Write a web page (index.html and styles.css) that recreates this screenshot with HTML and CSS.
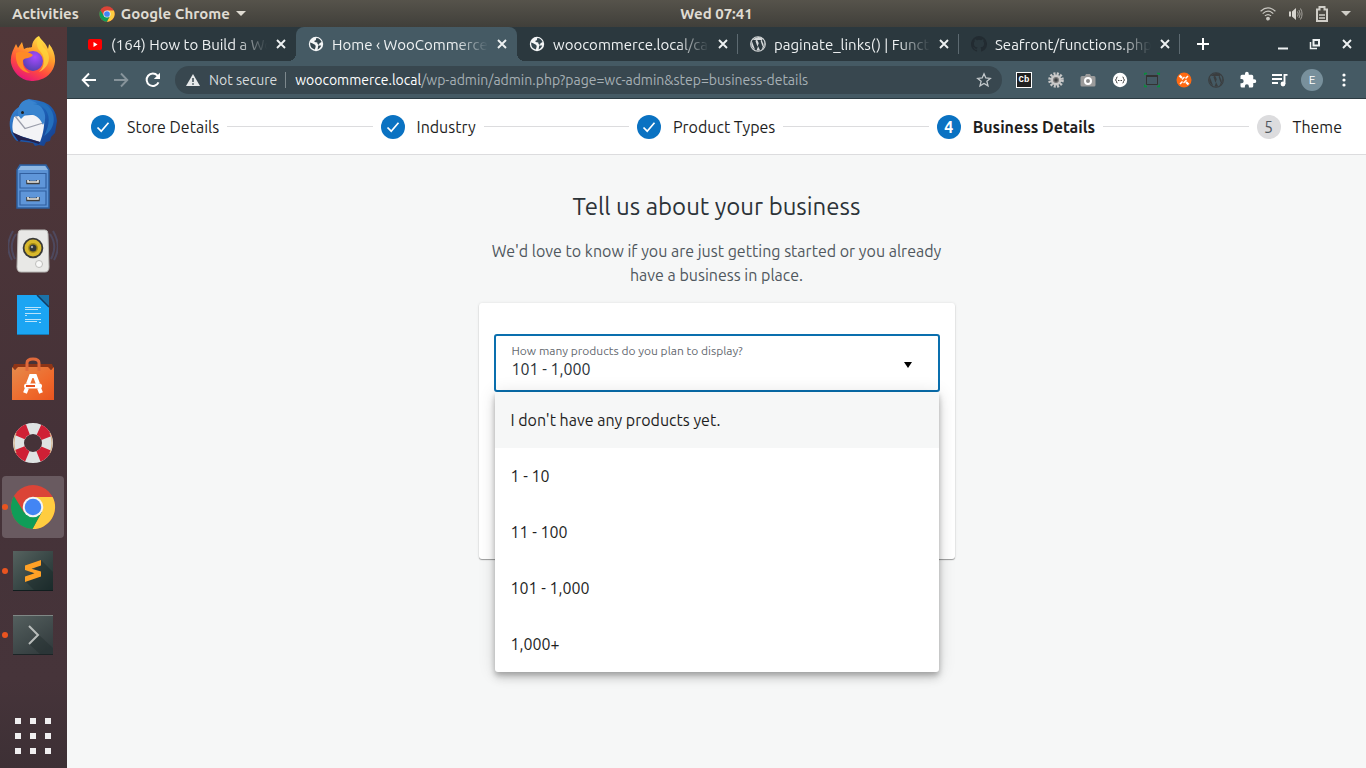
FILE: index.html
```
<!DOCTYPE html>
<html lang="en">
<head>
<meta charset="utf-8">
<title>Home ‹ WooCommerce</title>
<link rel="stylesheet" href="styles.css">
</head>
<body>
<svg class="defs" aria-hidden="true">
  <defs>
    <linearGradient id="fx-body" x1="0.8" y1="0" x2="0.3" y2="1"><stop offset="0" stop-color="#fff04f"/><stop offset="0.4" stop-color="#ff9a2b"/><stop offset="0.7" stop-color="#ff4a3f"/><stop offset="1" stop-color="#e3127f"/></linearGradient>
    <radialGradient id="fx-core" cx="0.6" cy="0.3" r="0.8"><stop offset="0" stop-color="#a84bff"/><stop offset="1" stop-color="#4a3fa8"/></radialGradient>
    <linearGradient id="tb" x1="0" y1="0" x2="1" y2="1"><stop offset="0" stop-color="#3f8fdb"/><stop offset="0.5" stop-color="#1d5fb5"/><stop offset="1" stop-color="#153a86"/></linearGradient>
    <linearGradient id="bag" x1="0" y1="0" x2="1" y2="1"><stop offset="0" stop-color="#e58a4c"/><stop offset="0.6" stop-color="#ef6a2c"/><stop offset="1" stop-color="#e9541f"/></linearGradient>
    <linearGradient id="slate" x1="0" y1="0" x2="1" y2="1"><stop offset="0" stop-color="#56625f"/><stop offset="1" stop-color="#1e2f2f"/></linearGradient>
    <linearGradient id="slate2" x1="0" y1="0" x2="0.6" y2="1"><stop offset="0" stop-color="#55605f"/><stop offset="1" stop-color="#343d3f"/></linearGradient>
    <symbol id="chrome" viewBox="0 0 48 48">
      <circle cx="24" cy="24" r="23" fill="#db4437"/>
      <path d="M4.1 12.5 14.5 29.5 24 34.5 24 47A23 23 0 0 1 4.1 12.5Z" fill="#0f9d58"/>
      <path d="M24 13.5H44.5A23 23 0 0 1 23.5 47L33.1 29.2Z" fill="#ffcd40"/>
      <path d="M23.5 47 33.2 29.3 24 24 14.8 29.3 24 34.5Z" fill="#0f9d58"/>
      <circle cx="24" cy="24" r="10.7" fill="#f5f5f5"/>
      <circle cx="24" cy="24" r="8.6" fill="#4285f4"/>
    </symbol>
    <symbol id="globe" viewBox="0 0 16 16">
      <circle cx="8" cy="8" r="7.2" fill="#f4f6f7"/>
      <path d="M2.2 6.6C3.6 7.3 4.8 7.6 6 8.2 7.6 9 7.9 9.8 7.6 10.9L6.8 13.4C3.7 13 1.8 10.4 2.2 6.6ZM8.3 2.1C11 2.2 12.8 3.8 13.6 6L11.5 7.2 11 8.8C9.7 8.6 9.2 7.6 9.3 6.6L6.7 6C6 4.8 6.6 4.5 7.8 4.3ZM10.2 9.6 13.2 9.6C12.6 11.6 11.6 12.5 9.6 13.5Z" fill="#34464e"/>
    </symbol>
    <symbol id="wp" viewBox="0 0 24 24">
      <path fill="currentColor" d="M12.2 15.5 9.8 21.7a10 10 0 0 0 5.3-.4zM20.600 7.100c.8 2.200.3 4.400-.6 7.100L17.200 20.600A10 10 0 0 0 20.600 7.100zM2.900 8A10 10 0 0 0 7.700 21zM4 6.100c2 .1 4.500-.1 5 0 .5.300.2.900-.9 1l3.100 9.200 1.900-5.500-1.600-3.800c-.8 0-.8-.9-.1-1 2 .2 3.800.1 5.300 0 .6.200.5.900-.8 1l3 9c1.200-3.400 1-4.500.2-6.300-1.200-2.200-1.700-4.500.3-5.100A10 10 0 0 0 4 6.100z"/>
      <circle cx="12" cy="12" r="11" fill="none" stroke="currentColor" stroke-width="1.600"/>
    </symbol>
    <symbol id="x" viewBox="0 0 12 12"><path d="M2 2 10 10M10 2 2 10" stroke="currentColor" stroke-width="1.900" fill="none"/></symbol>
    <symbol id="tick" viewBox="0 0 24 24"><path d="M6.500 12.500 10.200 16.200 17.500 7.800" stroke="#fff" stroke-width="1.700" fill="none"/></symbol>
  </defs>
</svg>

<header class="panel">
  <div class="panel-side">
    <button class="panel-btn">Activities</button>
    <button class="panel-btn panel-app"><svg width="16" height="16"><use href="#chrome"/></svg>Google Chrome<svg width="10" height="5" viewBox="0 0 10 5"><path d="M0 0H10L5 5Z" fill="currentColor"/></svg></button>
  </div>
  <time class="clock">Wed 07:41</time>
  <div class="panel-side panel-status">
    <svg width="16" height="14" viewBox="0 0 16 14" fill="none" stroke="#c9c7c1" stroke-width="1.200"><path d="M.6 4.200Q8-2.400 15.400 4.200M2.700 6.600Q8 1.800 13.300 6.600M4.900 8.900Q8 6.200 11.100 8.900"/><circle cx="8" cy="11.600" r="1.300" fill="#c9c7c1"/></svg>
    <svg width="14" height="14" viewBox="0 0 14 14" fill="none" stroke="#a5a39d"><path d="M0 4.500H2V9.500H0ZM3 4.500 7 1V13L3 9.500Z" fill="#d8d6d0" stroke="none"/><path d="M8.500 4.500Q10 7 8.500 9.500M10 3Q12.300 7 10 11M11.500 1.500Q14.600 7 11.500 12.500"/></svg>
    <svg width="12" height="16" viewBox="0 0 12 16" fill="none" stroke="#d0cec8" stroke-width="2"><path d="M1 3.500H3.500V1H8.500V3.500H11V15H1Z"/><path d="M3 9H9M3 12H9" stroke-width="1.500"/></svg>
    <svg width="10" height="5" viewBox="0 0 10 5"><path d="M0 0H10L5 5Z" fill="#d0cec8"/></svg>
  </div>
</header>

<div class="desktop">
<nav class="dock" aria-label="Dock">
  <button class="app" aria-label="Firefox"><svg width="48" height="48" viewBox="0 0 48 48">
    <path d="M30 1C32 5 37 8 39 14C40 10 40 9 40 9C46 16 48 26 44 34A22.500 22.500 0 0 1 2 28C1 21 4 15 7 9L9 13 13 7 15 14C18 12 21 13 23 12C23 7 26 3 30 1Z" fill="url(#fx-body)"/>
    <circle cx="24" cy="26" r="10" fill="url(#fx-core)"/>
    <path d="M7 18C13 15 20 17 24 20C21 24 17 22 14 25C13 31 16 35 21 38C10 37 6 27 7 18Z" fill="#ff8a26"/>
    <path d="M30 15C36 20 37 31 30 37C42 32 43 18 34 12L30 2C27 7 28 12 30 15Z" fill="#ffd83c" opacity=".75"/></svg></button>
  <button class="app" aria-label="Thunderbird"><svg width="48" height="48" viewBox="0 0 48 48">
    <path d="M20 0C25 2 42 0 47 16L48 22 47 28 46 34 42 38 41 42 37 43 35 47 30 46 26 47 24 44 8 42C-2 33-2 15 10 8C12 3 15 1 20 0Z" fill="url(#tb)"/>
    <path d="M10 17 34 15C37 22 34 36 31 43L5 35C2 29 4 22 5 18Z" fill="#f3f3f6"/><path d="M6 17 16 29.500 34 24" fill="none" stroke="#9b9eab" stroke-width="1.300"/>
    <path d="M20 1C30 3 41 14 34 26C31 19 26 14 16 16L12 20 9 16C8 7 13 1 20 1Z" fill="#3984cf"/><path d="M24 5C38 6 45 18 35 37C49 28 47 11 35 4Z" fill="#2470bd"/><path d="M3 33 14 38 31 43 30 45 20 42 12 41 10 43Z" fill="#24234f"/><circle cx="13.500" cy="13.500" r="1.500" fill="#222"/></svg></button>
  <button class="app" aria-label="Files"><svg width="36" height="48" viewBox="0 0 36 48">
    <path d="M5 2H31L34 7V45H2V7Z" fill="#5b92d4" stroke="#2c5f9f" stroke-width="1.500"/><path d="M6 3H30L33 7H3Z" fill="#8fb8e3"/>
    <path d="M5 10.500H31V25H5ZM5 28H31V42H5Z" fill="#5f96d9" stroke="#315f9f" stroke-width="1.200"/>
    <path d="M13 17V19.500H23V17M13 34V36.500H23V34" stroke="#3d3d3d" stroke-width="3.500" fill="none"/><path d="M13 17V19H23V17M13 34V36H23V34" stroke="#ecece8" stroke-width="1.600" fill="none"/></svg></button>
  <button class="app" aria-label="Rhythmbox"><svg width="50" height="46" viewBox="0 0 50 46">
    <path d="M8 6Q0 18 7 31M5 3Q-4 18 4 32M42 6Q50 18 43 31M45 3Q54 18 46 32" fill="none" stroke="#53628c" stroke-width="2" opacity=".45"/>
    <path d="M13 2H37Q40 2 40 6L41 39Q41 44 37 44H13Q9 44 9 39L10 6Q10 2 13 2Z" fill="#e8e8e6" stroke="#b9b9b6"/>
    <circle cx="25" cy="20" r="10.300" fill="#393a38"/><circle cx="25" cy="20" r="8.500" fill="#d8b82c"/><circle cx="25" cy="20" r="5" fill="#a88d16"/><circle cx="25" cy="20" r="3.500" fill="#303538"/><circle cx="24" cy="19" r="1.200" fill="#a6a6a6"/><circle cx="31" cy="36" r="3.500" fill="#f8f8f7" stroke="#bdbdbb"/></svg></button>
  <button class="app" aria-label="Writer"><svg width="32" height="40" viewBox="0 0 32 40"><path d="M0 0H20L32 12V40H0Z" fill="#1ba5f3"/><path d="M20 0H32V12Z" fill="#1b72a8"/><path d="M20 0 32 12" stroke="#123c63" stroke-width="1.500"/><path d="M0 39.500H32" stroke="#167bb5"/><path d="M8 12.500H24M8 14.500H21M8 18.500H24M8 20.500H10M8 24.500H24M8 26.500H20M22 27.500H24" stroke="#b9e3fb" stroke-width="1"/></svg></button>
  <button class="app" aria-label="Ubuntu Software"><svg width="42" height="44" viewBox="0 0 42 44"><path d="M2 7H40L42 12H0Z" fill="#8e3517"/><path d="M0 10 3 13 6 10H36L39 13 42 10V43H0Z" fill="url(#bag)"/><path d="M15 14V6Q15 2 21 2T27 6V14" fill="none" stroke="#e06a3c" stroke-width="3"/><path d="M16 27 19 19H23L26 27M15 31 13 36M27 31 29 36" stroke="#fff" stroke-width="4" fill="none"/><rect x="12" y="26.500" width="18" height="5" rx="2.500" fill="#fff"/><path d="M14 29H23" stroke="#e95420" stroke-width="2"/></svg></button>
  <button class="app" aria-label="Help"><svg width="42" height="42" viewBox="0 0 42 42"><circle cx="21" cy="21" r="14.500" fill="none" stroke="#dfe3e3" stroke-width="11"/><circle cx="21" cy="21" r="14.500" fill="none" stroke="#cf2035" stroke-width="11" stroke-dasharray="11.400 11.377" stroke-dashoffset="-5.700"/><path d="M4 11Q0 21 4 31M38 11Q42 21 38 31" fill="none" stroke="#d6b184"/></svg></button>
  <button class="app running current" aria-label="Google Chrome"><svg width="46" height="46"><use href="#chrome"/></svg></button>
  <button class="app running" aria-label="Sublime Text"><svg width="40" height="40" viewBox="0 0 40 40"><path d="M0 0H40V40H0Z" fill="url(#slate)"/><path d="M28 9 40 21V40H22L12 30Z" fill="#132222" opacity=".35"/><path d="M0 39.500H40" stroke="#101d1e"/><path d="M12 14.500 28 9V14.500L18.500 17.700 28 20.500V25.500L12 31V25.500L21.500 22.200 12 19Z" fill="#ffa126"/></svg></button>
  <button class="app running" aria-label="Terminal"><svg width="40" height="40" viewBox="0 0 40 40"><path d="M0 0H40V40H0Z" fill="url(#slate2)"/><path d="M26 20 40 33V40H28L16 29Z" fill="#1d2729" opacity=".35"/><path d="M0 .5H40" stroke="#808886"/><path d="M0 39.500H40" stroke="#1c2426"/><path d="M16 11 25 20 16 29" fill="none" stroke="#b9bdbb" stroke-width="2"/></svg></button>
  <button class="app apps-grid" aria-label="Show Applications"><svg width="36" height="36" viewBox="0 0 36 36" fill="#f0eff0"><path d="M0 0h6v6H0zM15 0h6v6h-6zM30 0h6v6h-6zM0 15h6v6H0zM15 15h6v6h-6zM30 15h6v6h-6zM0 30h6v6H0zM15 30h6v6h-6zM30 30h6v6h-6z"/></svg></button>
</nav>

<div class="browser">
  <div class="tabstrip">
    <div class="tabs">
      <div class="tab before-active"><svg width="16" height="16" viewBox="0 0 16 16"><rect x="1" y="3" width="14" height="11" rx="2" fill="#f00"/><path d="M6.500 6 10.500 8.500 6.500 11Z" fill="#fff"/></svg><span class="tab-title">(164) How to Build a Wo</span><button class="close" aria-label="Close tab"><svg width="12" height="12"><use href="#x"/></svg></button></div>
      <div class="tab active"><svg width="16" height="16"><use href="#globe"/></svg><span class="tab-title">Home ‹ WooCommerce</span><button class="close" aria-label="Close tab"><svg width="12" height="12"><use href="#x"/></svg></button></div>
      <div class="tab"><svg width="16" height="16"><use href="#globe"/></svg><span class="tab-title">woocommerce.local/ca</span><button class="close" aria-label="Close tab"><svg width="12" height="12"><use href="#x"/></svg></button></div>
      <div class="tab"><svg class="wp-light" width="16" height="16"><use href="#wp"/></svg><span class="tab-title">paginate_links() | Funct</span><button class="close" aria-label="Close tab"><svg width="12" height="12"><use href="#x"/></svg></button></div>
      <div class="tab"><svg width="16" height="16" viewBox="0 0 16 16"><path fill="#222b31" d="M8 0a8 8 0 0 0-2.530 15.590c.4.070.550-.170.550-.380v-1.500c-2.230.490-2.700-.940-2.700-.940-.360-.920-.890-1.170-.890-1.170-.730-.500.050-.490.050-.490.800.060 1.230.830 1.230.830.720 1.220 1.870.870 2.330.660.070-.520.280-.870.510-1.070-1.780-.2-3.640-.890-3.640-3.950 0-.870.310-1.590.820-2.150-.080-.2-.360-1.020.080-2.120 0 0 .670-.210 2.200.820a7.600 7.600 0 0 1 4 0c1.530-1.040 2.200-.820 2.200-.820.440 1.100.160 1.920.080 2.120.510.560.820 1.270.820 2.150 0 3.070-1.870 3.750-3.650 3.950.290.250.540.730.540 1.480v2.200c0 .210.150.460.550.380A8 8 0 0 0 8 0z"/></svg><span class="tab-title">Seafront/functions.php</span><button class="close" aria-label="Close tab"><svg width="12" height="12"><use href="#x"/></svg></button></div>
      <button class="new-tab" aria-label="New tab"><svg width="14" height="14" viewBox="0 0 14 14"><path d="M7 1V13M1 7H13" stroke="#fff" stroke-width="2"/></svg></button>
    </div>
    <div class="window-controls">
      <button aria-label="Minimize"><svg width="12" height="12" viewBox="0 0 12 12"><path d="M1 10.500H11" stroke="#eef1f2" stroke-width="2"/></svg></button>
      <button aria-label="Restore"><svg width="12" height="12" viewBox="0 0 12 12" fill="none" stroke="#eef1f2"><path d="M4.500 2H10V7.500H4.500Z" stroke-width="2"/><path d="M1.500 4V10.500H8" stroke-width="1.500"/></svg></button>
      <button aria-label="Close"><svg width="12" height="12"><use href="#x"/></svg></button>
    </div>
  </div>

  <div class="toolbar">
    <button class="tool" aria-label="Back"><svg width="16" height="16" viewBox="0 0 16 16" fill="none" stroke="#fff" stroke-width="1.900"><path d="M15 8H2M8 1.500 1.700 8 8 14.500"/></svg></button>
    <button class="tool" aria-label="Forward"><svg width="16" height="16" viewBox="0 0 16 16" fill="none" stroke="#87949b" stroke-width="1.900"><path d="M1 8H14M8 1.500 14.300 8 8 14.500"/></svg></button>
    <button class="tool" aria-label="Reload"><svg width="16" height="16" viewBox="0 0 16 16"><path d="M13.500 10.300A6.200 6.200 0 1 1 12.500 3.700L14 5.300" fill="none" stroke="#fff" stroke-width="2"/><path d="M15 .8V7H8.800Z" fill="#fff"/></svg></button>
    <div class="omnibox">
      <svg width="14" height="14" viewBox="0 0 14 14"><path d="M7 1 14 13H0Z" fill="#e6e9ea"/><path d="M7 5V9M7 10.200V11.700" stroke="#38474f" stroke-width="1.500"/></svg>
      <span class="insecure">Not secure</span>
      <a class="url" href="#"><b>woocommerce.local</b>/wp-admin/admin.php?page=wc-admin&amp;step=business-details</a>
      <button class="star" aria-label="Bookmark"><svg width="16" height="16" viewBox="0 0 16 16"><path d="M8 1.800 9.800 6 14.300 6.400 10.900 9.300 12 13.800 8 11.400 4 13.800 5.100 9.300 1.700 6.400 6.200 6Z" fill="none" stroke="#c3c9cc" stroke-width="1.300"/></svg></button>
    </div>
    <div class="extensions">
      <button class="tool" aria-label="Cb"><span class="cb">Cb</span></button>
      <button class="tool" aria-label="Settings"><svg width="16" height="16" viewBox="0 0 16 16"><circle cx="8" cy="8" r="6.300" fill="none" stroke="#c8c8c8" stroke-width="3" stroke-dasharray="2 1.300"/><circle cx="8" cy="8" r="4.200" fill="#777" stroke="#c8c8c8" stroke-width="2.500"/><circle cx="8" cy="8" r="1.700" fill="#3d4346"/></svg></button>
      <button class="tool" aria-label="Screenshot"><svg width="16" height="14" viewBox="0 0 16 14"><path d="M2 3H5L6 1H10L11 3H14Q15.500 3 15.500 4.500V12Q15.500 13.500 14 13.500H2Q.5 13.500.5 12V4.500Q.5 3 2 3Z" fill="#9b9b9b"/><circle cx="8" cy="8" r="3" fill="#888" stroke="#fff" stroke-width="2"/></svg></button>
      <button class="tool" aria-label="JSON viewer"><svg width="16" height="16" viewBox="0 0 16 16"><circle cx="8" cy="8" r="7.200" fill="#fff"/><path d="M5.500 5Q4.300 5 4.500 6.300 4.500 7.700 3.300 8 4.500 8.300 4.500 9.700 4.300 11 5.500 11M10.500 5Q11.700 5 11.500 6.300 11.500 7.700 12.700 8 11.500 8.300 11.500 9.700 11.700 11 10.500 11" fill="none" stroke="#444"/><path d="M6 8.500H10" stroke="#444" stroke-dasharray="1 .5"/></svg></button>
      <button class="tool" aria-label="Window resizer"><svg width="16" height="16" viewBox="0 0 16 16" fill="none"><path d="M2.500 3.500H13.500V12.500H2.500Z" stroke="#333"/><path d="M2.500 4H13.500" stroke="#333" stroke-width="2"/><path d="M.5 3V1.500H3M13 1.500H15.500V3M15.500 12.500V14.500H13M3 14.500H.5V12.500" stroke="#0b8c3c" stroke-width="1.300"/></svg></button>
      <button class="tool" aria-label="Site tool"><svg width="16" height="16" viewBox="0 0 16 16"><circle cx="8" cy="8" r="7.500" fill="#ff6a13"/><path d="M3.500 3.500 6 6M12.500 12.500 10 10" stroke="#fff" stroke-width="2.200"/><path d="M4 12 6.500 9.500M12 4 9.500 6.500" stroke="#fff" stroke-width="1.500"/><path d="M6 7.500 8.500 5M7.500 11 10.500 8" stroke="#fff" stroke-width="1.200"/></svg></button>
      <button class="tool wp-dark" aria-label="WordPress"><svg width="16" height="16"><use href="#wp"/></svg></button>
      <button class="tool" aria-label="Extensions"><svg width="18" height="18" viewBox="0 0 24 24"><path fill="#fff" d="M20.500 11H19V7a2 2 0 0 0-2-2h-4V3.500a2.500 2.500 0 0 0-5 0V5H4a2 2 0 0 0-2 2v3.800h1.500a2.700 2.700 0 0 1 0 5.400H2V20a2 2 0 0 0 2 2h3.800v-1.500a2.700 2.700 0 0 1 5.400 0V22H17a2 2 0 0 0 2-2v-4h1.500a2.500 2.500 0 0 0 0-5z"/></svg></button>
      <button class="tool" aria-label="Media"><svg width="18" height="16" viewBox="0 0 18 16"><path d="M1 3H11M1 7H11M1 11H7" stroke="#fff" stroke-width="1.800"/><path d="M16.500 2.900H13.500V12" stroke="#fff" stroke-width="1.900" fill="none"/><circle cx="12" cy="12" r="2.400" fill="#fff"/></svg></button>
      <button class="tool" aria-label="Profile"><span class="avatar">E</span></button>
      <button class="tool" aria-label="Menu"><svg width="4" height="14" viewBox="0 0 4 14" fill="#fff"><circle cx="2" cy="2" r="1.600"/><circle cx="2" cy="7" r="1.600"/><circle cx="2" cy="12" r="1.600"/></svg></button>
    </div>
  </div>

  <div class="page">
    <ol class="stepper">
      <li class="step"><span class="dot done"><svg width="24" height="24"><use href="#tick"/></svg></span>Store Details</li>
      <li class="rule" role="presentation"></li>
      <li class="step"><span class="dot done"><svg width="24" height="24"><use href="#tick"/></svg></span>Industry</li>
      <li class="rule" role="presentation"></li>
      <li class="step"><span class="dot done"><svg width="24" height="24"><use href="#tick"/></svg></span>Product Types</li>
      <li class="rule" role="presentation"></li>
      <li class="step now" aria-current="step"><span class="dot done">4</span>Business Details</li>
      <li class="rule" role="presentation"></li>
      <li class="step"><span class="dot">5</span>Theme</li>
    </ol>
    <main class="wizard">
      <h1>Tell us about your business</h1>
      <p class="intro">We'd love to know if you are just getting started or you already have a business in place.</p>
      <section class="card">
        <div class="select">
          <div class="field">
            <div class="field-text">
              <label for="products">How many products do you plan to display?</label>
              <input id="products" type="text" role="combobox" aria-expanded="true" aria-controls="product-options" value="101 - 1,000">
            </div>
            <svg width="8" height="9" viewBox="0 0 8 9" aria-hidden="true"><path d="M0 3H8L4 9Z"/></svg>
          </div>
          <div class="options" id="product-options" role="listbox">
            <button class="option highlighted" role="option">I don't have any products yet.</button>
            <button class="option" role="option">1 - 10</button>
            <button class="option" role="option">11 - 100</button>
            <button class="option" role="option" aria-selected="true">101 - 1,000</button>
            <button class="option" role="option">1,000+</button>
          </div>
        </div>
      </section>
    </main>
  </div>
</div>
</div>
</body>
</html>
```

FILE: styles.css
```
* { box-sizing: border-box; }
html, body { height: 100%; }
body {
  margin: 0;
  display: flex;
  flex-direction: column;
  font-family: Ubuntu, "Noto Sans", "Open Sans", sans-serif;
  font-size: 16px;
  overflow: hidden;
}
button { font: inherit; color: inherit; background: none; border: 0; padding: 0; margin: 0; }
svg { flex: none; display: block; }
.defs { position: absolute; width: 0; height: 0; }

/* Desktop panel */
.panel {
  display: grid;
  grid-template-columns: 1fr auto 1fr;
  align-items: center;
  height: 27px;
  flex: none;
  background: linear-gradient(#56534b, #403f3a);
  color: #dfdbd2;
  font-size: 15px;
  font-weight: 700;
}
.panel-side { display: flex; align-items: center; gap: 20px; padding-left: 12px; }
.panel-app { display: flex; align-items: center; gap: 6px; }
.clock { padding-left: 67px; }
.panel-status { justify-content: flex-end; gap: 13px; padding-right: 15px; }

.desktop { flex: 1; display: flex; min-height: 0; }

/* Dock */
.dock {
  width: 67px;
  flex: none;
  display: flex;
  flex-direction: column;
  gap: 2px;
  padding: 1px 3px 1px 2px;
  background: linear-gradient(#513739, #453238 55%, #46343a 88%, #3d3035);
}
.app {
  position: relative;
  display: flex;
  align-items: center;
  justify-content: center;
  height: 62px;
  border-radius: 4px;
}
.app.current { background: #695a60; }
.app.running::before {
  content: "";
  position: absolute;
  left: 0;
  width: 6px;
  height: 6px;
  border-radius: 50%;
  background: #e95420;
}
.apps-grid { margin-top: auto; }

/* Browser window */
.browser { flex: 1; min-width: 0; display: flex; flex-direction: column; }
.tabstrip { display: flex; justify-content: space-between; height: 34px; flex: none; background: #2b383e; color: #eef1f2; }
.tabs { display: flex; flex: 1; min-width: 0; padding-left: 8px; }
.tab {
  position: relative;
  display: flex;
  align-items: center;
  gap: 8px;
  flex: 0 1 221px;
  min-width: 0;
  padding: 0 9px 0 12px;
  font-size: 15px;
}
.tab-title {
  flex: 1;
  min-width: 0;
  overflow: hidden;
  white-space: nowrap;
  -webkit-mask-image: linear-gradient(to left, transparent, #000 32px);
  mask-image: linear-gradient(to left, transparent, #000 32px);
}
.tab:not(.active):not(.before-active)::after {
  content: "";
  position: absolute;
  right: 0;
  top: 7px;
  width: 1px;
  height: 20px;
  background: #5d6a71;
}
.tab.active { background: #455a64; border-radius: 8px 8px 0 0; }
.tab.active::before, .tab.active::after {
  content: "";
  position: absolute;
  bottom: 0;
  width: 8px;
  height: 8px;
}
.tab.active::before { left: -8px; background: radial-gradient(circle at 0 0, transparent 8px, #455a64 8px); }
.tab.active::after { right: -8px; background: radial-gradient(circle at 100% 0, transparent 8px, #455a64 8px); }
.wp-light { color: #d5d8d9; }
.wp-dark { color: #3a3d3f; }
.new-tab { width: 46px; display: flex; align-items: center; justify-content: center; }
.window-controls { display: flex; padding-right: 3px; }
.window-controls button { width: 32px; display: flex; align-items: center; justify-content: center; }

.toolbar {
  display: flex;
  align-items: center;
  height: 38px;
  flex: none;
  padding: 0 6px;
  background: #455a64;
  border-bottom: 1px solid #2c3b42;
}
.tool { width: 32px; height: 32px; flex: none; display: flex; align-items: center; justify-content: center; }
.omnibox {
  flex: 1;
  min-width: 0;
  height: 28px;
  display: flex;
  align-items: center;
  margin: 0 6px;
  padding: 0 10px 0 11px;
  border-radius: 14px;
  background: #38474f;
  font-size: 14px;
}
.insecure { color: #d7dbdd; margin-left: 9px; padding-right: 8px; border-right: 1px solid #7d888d; line-height: 16px; white-space: nowrap; }
.url { flex: 1; min-width: 0; overflow: hidden; white-space: nowrap; margin-left: 9px; color: #a7b0b5; text-decoration: none; }
.url b { font-weight: 400; color: #fff; }
.extensions { display: flex; }
.cb {
  width: 16px;
  height: 16px;
  border: 1px solid #fff;
  background: #212121;
  color: #fff;
  font: 700 9px/14px "Liberation Mono", monospace;
}
.avatar { width: 22px; height: 22px; border-radius: 50%; background: #78909c; color: #fff; font-size: 12px; line-height: 22px; }

/* Setup wizard */
.page { flex: 1; min-height: 0; background: #f6f7f7; color: #1e1e1e; }
.stepper {
  display: flex;
  align-items: center;
  gap: 8px;
  height: 56px;
  margin: 0;
  padding: 0 24px;
  list-style: none;
  background: #fff;
  border-bottom: 1px solid #dcdcde;
}
.step { display: flex; align-items: center; gap: 12px; white-space: nowrap; }
.step.now { font-weight: 700; }
.rule { flex: 1; height: 1px; background: #dcdcde; }
.dot { width: 24px; height: 24px; border-radius: 50%; background: #dcdcde; color: #50575e; line-height: 24px; text-align: center; }
.dot.done { background: #0a72c2; color: #fff; }

.wizard { max-width: 476px; margin: 0 auto; padding-top: 36px; }
h1 { margin: 0; font-size: 24px; font-weight: 400; line-height: 32px; text-align: center; color: #2c3338; }
.intro { margin: 16px 0; line-height: 24px; text-align: center; color: #50575e; }
.card {
  min-height: 256px;
  padding: 31px 15px;
  background: #fff;
  border-radius: 3px;
  box-shadow: 0 1px 1px rgba(0, 0, 0, .35), 0 0 3px rgba(0, 0, 0, .1);
}
.select { position: relative; }
.field {
  display: flex;
  align-items: center;
  justify-content: space-between;
  height: 58px;
  padding: 0 26px 0 16px;
  border: 2px solid #0a6fae;
  border-radius: 3px;
  background: #fff;
}
.field-text { flex: 1; display: flex; flex-direction: column; padding-bottom: 4px; }
.field label { font-size: 12px; line-height: 16px; color: #646970; }
.field input { width: 100%; height: 20px; padding: 0; border: 0; outline: 0; background: none; font: inherit; line-height: 20px; color: #2c3338; }
.options {
  position: absolute;
  top: 100%;
  left: 1px;
  right: 1px;
  display: flex;
  flex-direction: column;
  background: #fff;
  border-radius: 0 0 3px 3px;
  box-shadow: 0 3px 5px rgba(0, 0, 0, .2), 0 1px 18px rgba(0, 0, 0, .12), 0 6px 10px rgba(0, 0, 0, .14);
}
.option { height: 56px; padding: 0 16px; text-align: left; }
.option.highlighted { background: #f6f7f7; }
```
